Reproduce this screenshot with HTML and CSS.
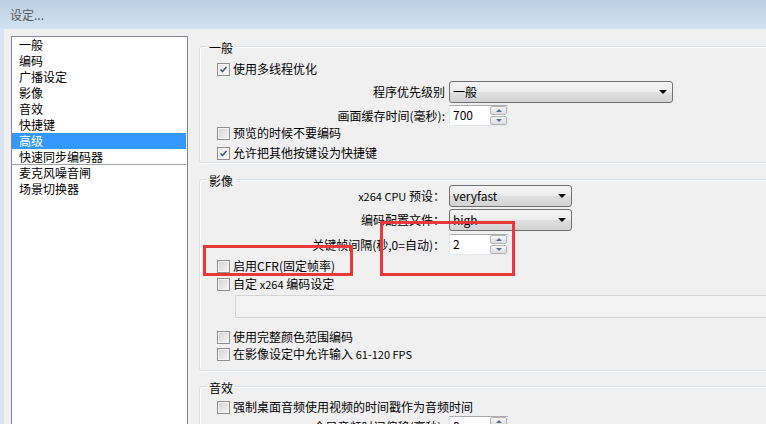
FILE: index.html
```html
<!DOCTYPE html>
<html lang="zh-CN">

<head>
    <meta charset="UTF-8">
    <title>设定...</title>
    <link rel="stylesheet" href="styles.css">
</head>

<body>
    <div class="window">
        <div class="titlebar">设定...</div>

        <div class="frame">
            <ul class="nav-list">
                <li>一般</li>
                <li>编码</li>
                <li>广播设定</li>
                <li>影像</li>
                <li>音效</li>
                <li>快捷键</li>
                <li class="active">高级</li>
                <li class="focused">快速同步编码器</li>
                <li>麦克风噪音闸</li>
                <li>场景切换器</li>
            </ul>

            <div class="panel">
                <!-- 一般 -->
                <div class="group group-general">
                    <div class="group-title">一般</div>
                    <label class="check-row r-multithread"><span class="cb checked"><svg viewBox="0 0 13 13"><path d="M3 6.5 L5.3 9 L10 3.5"/></svg></span><span>使用多线程优化</span></label>
                    <div class="field-row r-priority">
                        <span class="field-label">程序优先级别</span>
                        <div class="combo combo-wide"><span>一般</span><i class="arrow"></i></div>
                    </div>
                    <div class="field-row r-buffer">
                        <span class="field-label">画面缓存时间(毫秒):</span>
                        <div class="spin"><span class="spin-value">700</span><span class="spin-btns"><b class="up"></b><b class="down"></b></span></div>
                    </div>
                    <label class="check-row"><span class="cb"></span><span>预览的时候不要编码</span></label>
                    <label class="check-row r-hotkeys"><span class="cb checked"><svg viewBox="0 0 13 13"><path d="M3 6.5 L5.3 9 L10 3.5"/></svg></span><span>允许把其他按键设为快捷键</span></label>
                </div>

                <!-- 影像 -->
                <div class="group group-video">
                    <div class="group-title">影像</div>
                    <div class="field-row r-preset">
                        <span class="field-label"><span class="latin">x264 CPU</span> 预设：</span>
                        <div class="combo"><span>veryfast</span><i class="arrow"></i></div>
                    </div>
                    <div class="field-row r-profile">
                        <span class="field-label">编码配置文件：</span>
                        <div class="combo"><span>high</span><i class="arrow"></i></div>
                    </div>
                    <div class="field-row r-keyint">
                        <span class="field-label">关键帧间隔(秒,0=自动)：</span>
                        <div class="spin"><span class="spin-value">2</span><span class="spin-btns"><b class="up"></b><b class="down"></b></span></div>
                    </div>
                    <label class="check-row r-cfr"><span class="cb"></span><span>启用CFR(固定帧率)</span></label>
                    <label class="check-row r-custom"><span class="cb"></span><span>自定 <span class="latin">x264</span> 编码设定</span></label>
                    <div class="text-disabled"></div>
                    <label class="check-row r-fullrange"><span class="cb"></span><span>使用完整颜色范围编码</span></label>
                    <label class="check-row r-fps"><span class="cb"></span><span>在影像设定中允许输入 <span class="latin">61-120 FPS</span></span></label>
                </div>

                <!-- 音效 -->
                <div class="group group-audio">
                    <div class="group-title">音效</div>
                    <label class="check-row r-timestamp"><span class="cb"></span><span>强制桌面音频使用视频的时间戳作为音频时间</span></label>
                    <div class="field-row r-offset">
                        <span class="field-label">全局音频时间偏移(毫秒):</span>
                        <div class="spin"><span class="spin-value">0</span><span class="spin-btns"><b class="up"></b><b class="down"></b></span></div>
                    </div>
                </div>
            </div>
        </div>

        <!-- red marks drawn over the form -->
        <div class="mark mark-cfr"></div>
        <div class="mark mark-keyint"></div>
    </div>
</body>

</html>
```

FILE: styles.css
```css
body {
    margin: 0;
    font: 12px/16px "Noto Sans CJK SC", "Liberation Sans", sans-serif;
    color: #000;
    background-color: #f0f0f0;
}

.window {
    position: relative;
    width: 766px;
    height: 424px;
    overflow: hidden;
    display: flex;
    flex-direction: column;
    background-color: #f0f0f0;
}

.titlebar {
    height: 29px;
    flex-shrink: 0;
    padding-left: 10px;
    line-height: 29px;
    color: #5a5a5a;
    background: linear-gradient(#bccfe2, #d2e2f2);
}

.frame {
    flex: 1;
    display: flex;
    padding: 7px 0 0 7px;
    border-left: 4px solid #d8e4f0;
    min-height: 0;
}

/* left category list */
.nav-list {
    list-style: none;
    margin: 0;
    padding: 0 1px 0 0;
    width: 177px;
    flex-shrink: 0;
    box-sizing: border-box;
    background-color: #fff;
    border: 1px solid #828790;
    border-bottom: none;
}

.nav-list li {
    height: 16px;
    line-height: 16px;
    padding-left: 7px;
}

.nav-list li.active {
    background-color: #3399ff;
    color: #fff;
}

.nav-list li.focused {
    box-shadow: inset 0 -1px 0 #a0a0a0;
}

/* right settings panel */
.panel {
    flex: 1;
    margin: 10px 0 0 11px;
    min-width: 0;
}

.group {
    width: 640px;
    border: 1px solid #d5dfe5;
    border-radius: 3px;
    box-shadow: inset 1px 1px 0 #fff, 1px 1px 0 #fff;
    padding: 0 0 0 17px;
}

.group-general {
    padding-bottom: 2px;
}

.group-video {
    margin-top: 16px;
    padding-bottom: 9px;
}

.group-audio {
    margin-top: 15px;
    padding-bottom: 20px;
}

.group-title {
    width: max-content;
    margin: -7px 0 0 -10px;
    padding: 0 2px;
    background-color: #f0f0f0;
    height: 15px;
}

.check-row {
    display: flex;
    align-items: center;
    height: 14px;
    white-space: nowrap;
}

.cb {
    width: 13px;
    height: 13px;
    box-sizing: border-box;
    margin-right: 3px;
    border: 1px solid #8e8f8f;
    background: linear-gradient(135deg, #d2d2d2, #f6f6f6);
    box-shadow: inset 0 0 0 1px #f4f4f4;
    flex-shrink: 0;
}

.cb svg {
    display: block;
    width: 11px;
    height: 11px;
}

.cb svg path {
    fill: none;
    stroke: #3d5a88;
    stroke-width: 1.8;
}

.cb.checked {
    background: linear-gradient(135deg, #e4e4e4, #fbfbfb);
}

.latin {
    font-size: 11px;
}

.field-row {
    display: flex;
    align-items: center;
}

.field-label {
    width: 228px;
    margin-right: 4px;
    text-align: right;
    white-space: nowrap;
}

.combo {
    width: 123px;
    height: 22px;
    box-sizing: border-box;
    display: flex;
    align-items: center;
    justify-content: space-between;
    padding: 0 5px 0 3px;
    border: 1px solid #707070;
    border-radius: 3px;
    background: linear-gradient(#f4f4f4 0%, #ececec 48%, #dfdfdf 52%, #d3d3d3 100%);
}

.combo-wide {
    width: 224px;
}

.arrow {
    width: 0;
    height: 0;
    border-left: 4px solid transparent;
    border-right: 4px solid transparent;
    border-top: 4px solid #000;
}

.spin {
    width: 59px;
    height: 21px;
    box-sizing: border-box;
    display: flex;
    background-color: #fff;
    border: 1px solid #e2e8ee;
    border-top-color: #abadb3;
}

.spin-value {
    flex: 1;
    padding-left: 3px;
    line-height: 17px;
}

.spin-btns {
    width: 17px;
    display: flex;
    flex-direction: column;
    gap: 1px;
}

.spin-btns b {
    flex: 1;
    display: flex;
    align-items: center;
    justify-content: center;
    border: 1px solid #b5b5b5;
    border-radius: 2px;
    background: linear-gradient(#f6f6f6, #dedede);
}

.spin-btns b::before {
    content: "";
    border-left: 3px solid transparent;
    border-right: 3px solid transparent;
}

.spin-btns .up::before {
    border-bottom: 3px solid #5b6f95;
}

.spin-btns .down::before {
    border-top: 3px solid #5b6f95;
}

.text-disabled {
    height: 23px;
    margin: 4px 0 0 18px;
    box-sizing: border-box;
    border: 1px solid #d4d4d4;
    background-color: #f3f3f3;
}

/* row spacing, general */
.r-multithread { margin-top: 7px; }
.r-priority { margin-top: 5px; }
.r-buffer { margin-top: 2px; }
.r-hotkeys { margin-top: 6px; }

/* row spacing, video */
.r-preset { margin-top: -3px; }
.r-profile { margin-top: 2px; }
.r-keyint { margin-top: 3px; }
.r-cfr { margin-top: 4px; }
.r-custom { margin-top: 4px; }
.r-fullrange { margin-top: 12px; }
.r-fps { margin-top: 3px; }

/* row spacing, audio */
.r-timestamp { margin-top: 5px; }
.r-offset { margin-top: 2px; }

/* red highlight boxes */
.mark {
    position: absolute;
    border: 3px solid #e8383c;
    box-sizing: border-box;
}

.mark-cfr {
    left: 203px;
    top: 245px;
    width: 150px;
    height: 31px;
}

.mark-keyint {
    left: 380px;
    top: 221px;
    width: 135px;
    height: 55px;
}
```
